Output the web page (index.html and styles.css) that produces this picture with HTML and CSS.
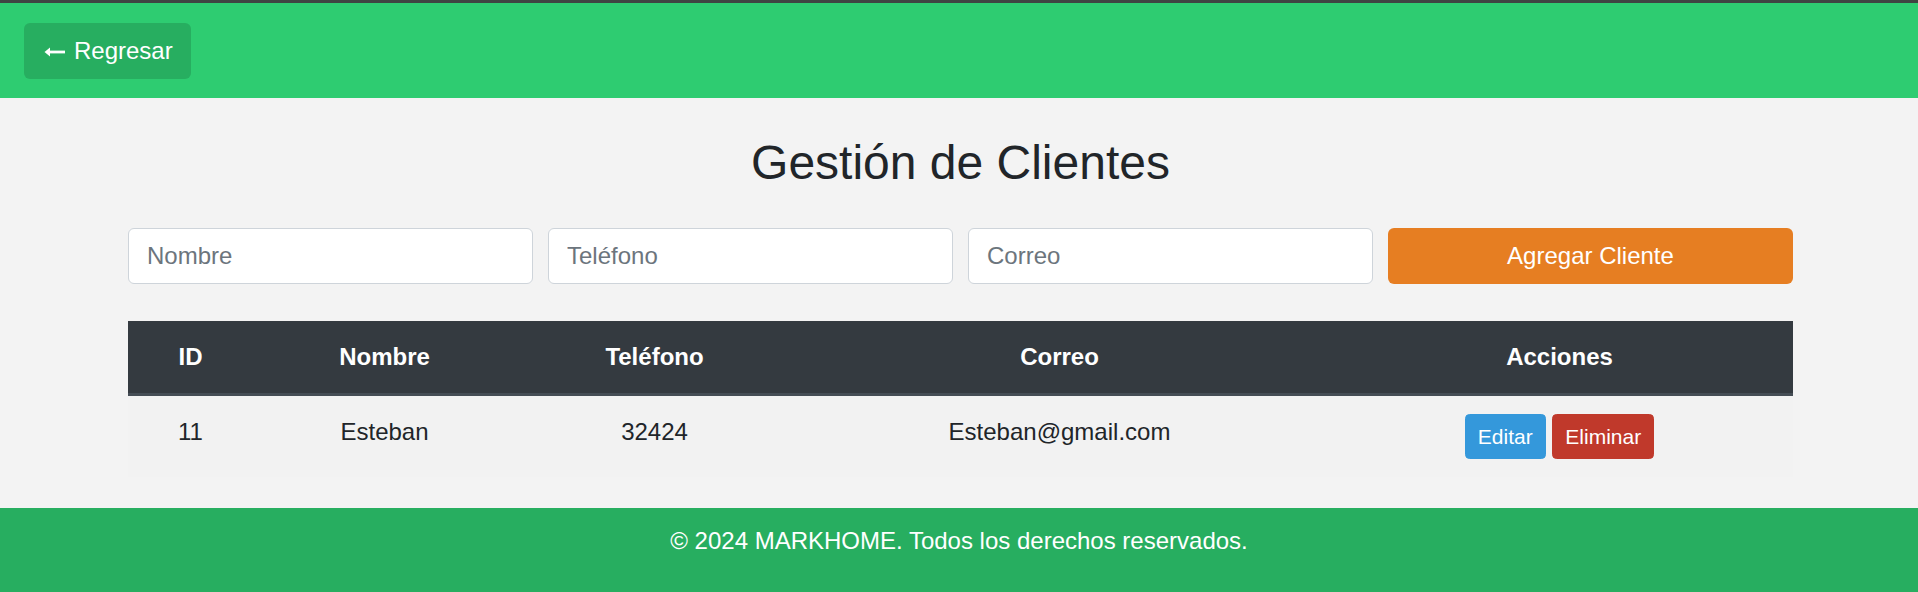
FILE: index.html
```html
<!DOCTYPE html>
<html lang="es">
<head>
<meta charset="utf-8">
<title>Gestión de Clientes</title>
<link rel="stylesheet" href="styles.css">
</head>
<body>
<header class="topbar">
  <a class="back-btn" href="#"><svg class="arrow" width="21" height="12" viewBox="0 0 21 12" aria-hidden="true"><path d="M0.5 6 L6 1.5 L6 10.5 Z" fill="#fff"/><rect x="5" y="4.6" width="16" height="2.8" fill="#fff"/></svg>Regresar</a>
</header>
<main class="container">
  <h1 class="title">Gestión de Clientes</h1>
  <form class="client-form">
    <input class="field" type="text" placeholder="Nombre">
    <input class="field" type="text" placeholder="Teléfono">
    <input class="field" type="text" placeholder="Correo">
    <button class="add-btn" type="button">Agregar Cliente</button>
  </form>
  <table class="clients">
    <colgroup>
      <col class="c-id"><col class="c-name"><col class="c-phone"><col class="c-mail"><col class="c-actions">
    </colgroup>
    <thead>
      <tr><th>ID</th><th>Nombre</th><th>Teléfono</th><th>Correo</th><th>Acciones</th></tr>
    </thead>
    <tbody>
      <tr>
        <td>11</td><td>Esteban</td><td>32424</td><td>Esteban@gmail.com</td>
        <td><button class="sm-btn edit" type="button">Editar</button> <button class="sm-btn del" type="button">Eliminar</button></td>
      </tr>
    </tbody>
  </table>
</main>
<footer class="footer">© 2024 MARKHOME. Todos los derechos reservados.</footer>
</body>
</html>
```
FILE: styles.css
```css
* { box-sizing: border-box; }
body {
  margin: 0;
  background: #f3f3f3;
  font-family: "Liberation Sans", Arial, sans-serif;
  font-size: 24px;
  line-height: 1.5;
  color: #212529;
}
.topbar {
  background: #2ecc71;
  border-top: 3px solid #3f4442;
  padding: 20px 24px 19px;
  display: flex;
}
.back-btn {
  display: inline-flex;
  align-items: center;
  background: #27ae60;
  color: #fff;
  text-decoration: none;
  padding: 10px 18px 10px 20px;
  line-height: 36px;
  border-radius: 6px;
}
.arrow {
  margin: 1px 9px 0 0;
  flex: none;
}
.container {
  width: 1665px;
  margin: 0 0 0 calc(50% - 831px);
}
.title {
  font-size: 48px;
  font-weight: 400;
  line-height: 1.2;
  text-align: center;
  margin: 36px 0 36px;
  color: #212529;
}
.client-form {
  display: grid;
  grid-template-columns: repeat(4, 1fr);
  gap: 15px;
  margin: 0 0 37px;
}
.field {
  height: 56px;
  border: 1.5px solid #ced4da;
  border-radius: 6px;
  background: #fff;
  padding: 0 18px;
  font-family: inherit;
  font-size: 24px;
  color: #495057;
}
.field::placeholder { color: #6c757d; }
.add-btn {
  height: 56px;
  border: none;
  border-radius: 6px;
  background: #e67e22;
  color: #fff;
  font-family: inherit;
  font-size: 24px;
}
.clients {
  width: 100%;
  border-collapse: collapse;
  table-layout: fixed;
  margin-bottom: 31px;
}
.c-id { width: 125px; }
.c-name { width: 263px; }
.c-phone { width: 277px; }
.c-mail { width: 533px; }
.c-actions { width: 467px; }
.clients th {
  background: #343a40;
  color: #fff;
  font-weight: 700;
  padding: 18px;
  line-height: 36px;
  text-align: center;
  border-bottom: 3px solid #454d55;
}
.clients td {
  background: #f2f2f2;
  padding: 18px;
  line-height: 36px;
  text-align: center;
  vertical-align: top;
}
.sm-btn {
  display: inline-block;
  font-family: inherit;
  font-size: 21px;
  line-height: 31.5px;
  padding: 6px 12px;
  border-radius: 4.5px;
  color: #fff;
  vertical-align: baseline;
}
.edit { background: #3498db; border: 1px solid #3498db; }
.del { background: #c0392b; border: 1px solid #c0392b; }
.footer {
  background: #27ae60;
  color: #fff;
  text-align: center;
  padding: 15px 0 33px;
  line-height: 36px;
}
```
